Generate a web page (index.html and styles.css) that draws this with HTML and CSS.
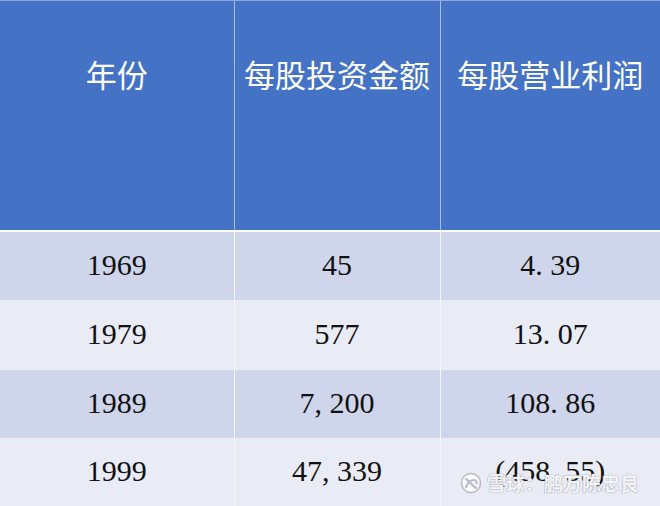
FILE: index.html
```html
<!DOCTYPE html>
<html lang="zh-CN">
<head>
<meta charset="utf-8">
<link rel="stylesheet" href="styles.css">
</head>
<body>
<div class="wrap">
<table class="tbl">
  <colgroup><col class="w1"><col class="w2"><col class="w3"></colgroup>
  <thead>
    <tr><th>年份</th><th>每股投资金额</th><th>每股营业利润</th></tr>
  </thead>
  <tbody>
    <tr class="odd r1"><td>1969</td><td>45</td><td>4<span class="p">.</span>39</td></tr>
    <tr class="even r2"><td>1979</td><td>577</td><td>13<span class="p">.</span>07</td></tr>
    <tr class="odd r3"><td>1989</td><td>7<span class="p">,</span>200</td><td>108<span class="p">.</span>86</td></tr>
    <tr class="even r4"><td>1999</td><td>47<span class="p">,</span>339</td><td class="neg">(458<span class="p">.</span>55)</td></tr>
  </tbody>
</table>
<div class="mark">
  <svg class="logo" width="22" height="22" viewBox="0 0 22 22">
    <circle cx="11" cy="11" r="9.5" fill="rgba(255,255,255,0.85)" stroke="#b9bcc8" stroke-width="1.6"/>
    <path d="M6 7 C9 9 12 13 16 16" fill="none" stroke="#b9bcc8" stroke-width="2.2" stroke-linecap="round"/>
    <path d="M6 15 C8 10 11 8 14 8 C16 8 17 9.5 16.5 11.5" fill="none" stroke="#b9bcc8" stroke-width="2.2" stroke-linecap="round"/>
  </svg>
  <span class="mtext">雪球：鹏万陈忠良</span>
</div>
</div>
</body>
</html>
```
FILE: styles.css
```css
html, body {
  margin: 0;
  padding: 0;
  background: #e9ebf5;
}
.wrap {
  position: relative;
  width: 660px;
  height: 506px;
  overflow: hidden;
}
.tbl {
  border-collapse: collapse;
  table-layout: fixed;
  width: 660px;
}
.w1 { width: 234px; }
.w2 { width: 206px; }
.w3 { width: 220px; }
th {
  height: 230px;
  box-sizing: border-box;
  background: #4472c4;
  color: #ffffff;
  font-family: "Noto Sans CJK SC", sans-serif;
  font-weight: normal;
  font-size: 31px;
  line-height: 40px;
  text-align: center;
  vertical-align: top;
  padding: 53px 0 0 0;
  border-bottom: 2px solid #ffffff;
  border-top: 1px solid #8ea8dc;
}
th + th {
  border-left: 1px solid #a8bce6;
}
td {
  font-family: "Liberation Serif", "Times New Roman", serif;
  font-size: 30px;
  color: #111111;
  text-align: center;
  vertical-align: middle;
  padding: 0 0 2px 0;
  box-sizing: border-box;
}
td + td {
  border-left: 1px solid #f4f6fb;
}
.odd { background: #cfd5ea; }
.even { background: #e9ebf5; }
.r1 td { height: 69px; }
.r2 td { height: 70px; }
.r3 td { height: 68px; }
.r4 td { height: 69px; }
.p {
  display: inline-block;
  width: 0.5em;
  text-align: left;
}
.mark {
  position: absolute;
  left: 460px;
  top: 471px;
  display: flex;
  align-items: center;
  gap: 5px;
}
.mtext {
  font-family: "Noto Sans CJK SC", sans-serif;
  font-weight: bold;
  font-size: 19px;
  line-height: 24px;
  color: rgba(255, 255, 255, 0.9);
  text-shadow: 0 0 1px #a9adbb, 0 0 1px #a9adbb, 0 0 1px #a9adbb;
}
```
